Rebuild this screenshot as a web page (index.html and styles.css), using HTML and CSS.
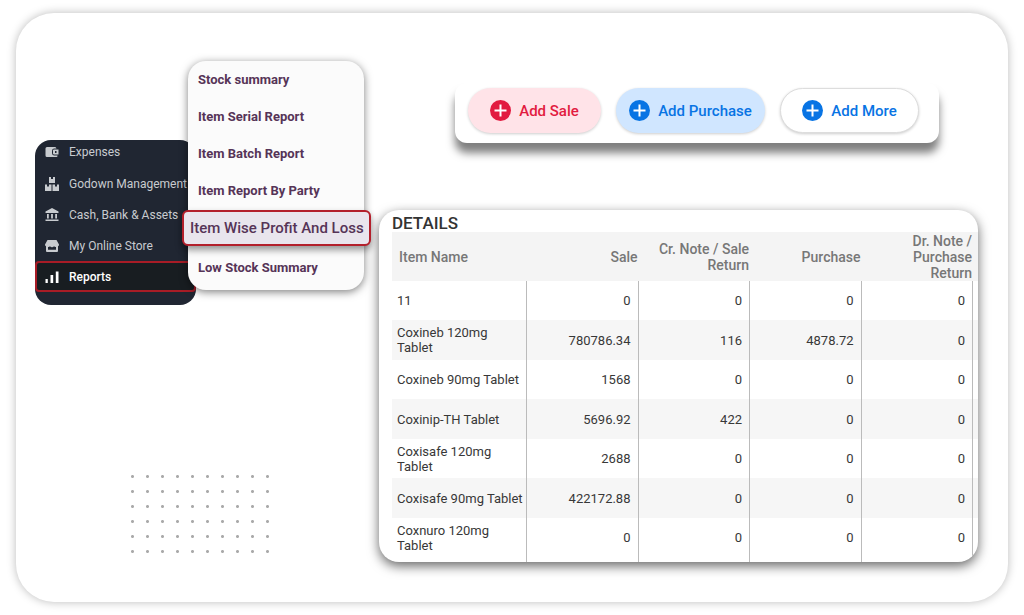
FILE: index.html
```html
<!DOCTYPE html>
<html lang="en">
<head>
<meta charset="utf-8">
<meta name="viewport" content="width=device-width, initial-scale=1">
<title>Item Wise Profit And Loss</title>
<link rel="stylesheet" href="styles.css">
</head>
<body>
<main class="stage">
  <section class="left">
    <div class="navigation">
      <nav class="sidebar" aria-label="Main">
        <a class="side-link" href="#expenses"><svg class="side-icon" viewBox="0 0 14 14"><path d="M2 2h8a2 2 0 0 1 1.500 1.500H9A2.500 2.500 0 0 0 7 6v2a2.500 2.500 0 0 0 2 2.500h3.500V11a1 1 0 0 1-1 1H2a1.500 1.500 0 0 1-1.500-1.500v-7A1.500 1.500 0 0 1 2 2zM9 4.500h4.500v5H9A1.200 1.200 0 0 1 8 8.500v-3a1 1 0 0 1 1-1zM10 6v2h1.500V6z" fill-rule="evenodd"/></svg>Expenses</a>
        <a class="side-link" href="#godown"><svg class="side-icon" viewBox="0 0 14 14"><path d="M4 0h2v2h2V0h2v6H4zM0 7.500h2v2h2v-2h2.500V14H0zM7.500 7.500H10v2h2v-2h2V14H7.500z"/></svg>Godown Management</a>
        <a class="side-link" href="#cash"><svg class="side-icon" viewBox="0 0 14 14"><path d="M7 0l6.500 3.500v1.500H.5V3.500zM2 6h1.800v4.500H2zM6.100 6h1.800v4.500H6.100zM10.200 6H12v4.500h-1.800zM.5 11.500h13V13H.5z"/></svg>Cash, Bank &amp; Assets</a>
        <a class="side-link" href="#store"><svg class="side-icon" viewBox="0 0 14 14"><path d="M2.500 1h9L14 5.500a2 2 0 0 1-1 1.800V12a1 1 0 0 1-1 1H2a1 1 0 0 1-1-1V7.300A2 2 0 0 1 0 5.500zM3 8v2.800h8V8a2.200 2.200 0 0 1-2-.8 2.500 2.500 0 0 1-4 0A2.200 2.200 0 0 1 3 8z" fill-rule="evenodd"/></svg>My Online Store</a>
        <a class="side-link side-link-active" href="#reports" aria-current="page"><svg class="side-icon" viewBox="0 0 14 14"><path d="M.5 9h2.300v4H.5zM5.500 5h2.700v8H5.500zM10.800 1.500h2.700V13h-2.700z"/></svg>Reports</a>
      </nav>
      <nav class="reports" aria-label="Reports">
        <a class="report" href="#stock">Stock summary</a>
        <a class="report" href="#serial">Item Serial Report</a>
        <a class="report" href="#batch">Item Batch Report</a>
        <a class="report" href="#party">Item Report By Party</a>
        <a class="report report-active" href="#profit" aria-current="page">Item Wise Profit And Loss</a>
        <a class="report" href="#low">Low Stock Summary</a>
      </nav>
    </div>
    <div class="dots"></div>
  </section>

  <section class="right">
    <div class="toolbar">
      <button class="pill pill-sale" type="button"><svg class="plus" viewBox="0 0 21 21"><circle cx="10.500" cy="10.500" r="10.500"/><path d="M10.500 4.500v12M4.500 10.500h12"/></svg>Add Sale</button>
      <button class="pill pill-purchase" type="button"><svg class="plus" viewBox="0 0 21 21"><circle cx="10.500" cy="10.500" r="10.500"/><path d="M10.500 4.500v12M4.500 10.500h12"/></svg>Add Purchase</button>
      <button class="pill pill-more" type="button"><svg class="plus" viewBox="0 0 21 21"><circle cx="10.500" cy="10.500" r="10.500"/><path d="M10.500 4.500v12M4.500 10.500h12"/></svg>Add More</button>
    </div>
    <div class="details">
      <h1 class="title" id="details-title">DETAILS</h1>
      <table class="table" aria-labelledby="details-title">
        <colgroup><col class="col-name"><col><col><col><col><col class="col-end"></colgroup>
        <thead>
          <tr><th scope="col">Item Name</th><th scope="col">Sale</th><th scope="col">Cr. Note / Sale Return</th><th scope="col">Purchase</th><th scope="col">Dr. Note /<br>Purchase<br>Return</th><td></td></tr>
        </thead>
        <tbody>
          <tr><td>11</td><td>0</td><td>0</td><td>0</td><td>0</td><td></td></tr>
          <tr><td>Coxineb 120mg<br>Tablet</td><td>780786.34</td><td>116</td><td>4878.72</td><td>0</td><td></td></tr>
          <tr><td>Coxineb 90mg Tablet</td><td>1568</td><td>0</td><td>0</td><td>0</td><td></td></tr>
          <tr><td>Coxinip-TH Tablet</td><td>5696.92</td><td>422</td><td>0</td><td>0</td><td></td></tr>
          <tr><td>Coxisafe 120mg<br>Tablet</td><td>2688</td><td>0</td><td>0</td><td>0</td><td></td></tr>
          <tr><td>Coxisafe 90mg Tablet</td><td>422172.88</td><td>0</td><td>0</td><td>0</td><td></td></tr>
          <tr><td>Coxnuro 120mg<br>Tablet</td><td>0</td><td>0</td><td>0</td><td>0</td><td></td></tr>
        </tbody>
      </table>
    </div>
  </section>
</main>
</body>
</html>
```

FILE: styles.css
```css
* {
  box-sizing: border-box;
}

body {
  margin: 0;
  padding: 13px 16px;
  background: #fff;
  font-family: Roboto, "Liberation Sans", sans-serif;
}

.stage {
  display: flex;
  padding: 48px 30px 40px 19px;
  border-radius: 38px;
  background: #fff;
  box-shadow: 0 0 10px rgba(0, 0, 0, 0.27);
}

.left {
  flex: none;
  width: 344px;
}

.navigation {
  display: flex;
  align-items: flex-start;
}

.sidebar {
  width: 161px;
  margin-top: 79px;
  padding-bottom: 13px;
  border-radius: 16px;
  background: #202632;
  overflow: hidden;
}

.side-link {
  display: flex;
  align-items: center;
  gap: 10px;
  height: 31px;
  padding-left: 10px;
  color: #c8cbcf;
  font-size: 12px;
  text-decoration: none;
  white-space: nowrap;
}

.side-link:first-child {
  height: 28px;
  padding-bottom: 4px;
}

.side-link-active {
  padding-left: 8px;
  border: 2px solid #a81c26;
  border-radius: 4px;
  background: #181d21;
  color: #fff;
  font-weight: 500;
}

.side-icon {
  flex: none;
  width: 14px;
  height: 14px;
  fill: currentColor;
}

.reports {
  z-index: 1;
  width: 176px;
  margin-left: -8px;
  padding-bottom: 4px;
  border-radius: 18px;
  background: #fbfbfb;
  box-shadow: 0 2px 8px rgba(0, 0, 0, 0.5);
}

.report {
  display: flex;
  align-items: center;
  height: 37px;
  padding-left: 10px;
  color: #563457;
  font-size: 13px;
  font-weight: 700;
  text-decoration: none;
  white-space: nowrap;
}

.report-active {
  height: 36px;
  margin: 1px -7px 3px -6px;
  padding-left: 6px;
  border: 2px solid #b3202c;
  border-radius: 6px;
  background: #e9e5ed;
  box-shadow: 0 4px 7px rgba(0, 0, 0, 0.4);
  font-size: 15px;
  font-weight: 500;
}

.dots {
  width: 150px;
  height: 90px;
  margin: 164px 0 0 90px;
  background: radial-gradient(circle, #aaa 1px, transparent 2px) 0 0 / 15px 15px;
}

.right {
  display: flex;
  flex: 1;
  flex-direction: column;
  gap: 67px;
  min-width: 0;
  padding-top: 22px;
}

.toolbar {
  display: flex;
  align-self: flex-end;
  gap: 15px;
  margin-right: 39px;
  padding: 5px 20px 10px 13px;
  border-radius: 12px;
  background: #fff;
  box-shadow: 0 10px 8px rgba(0, 0, 0, 0.5);
}

.pill {
  display: flex;
  align-items: center;
  justify-content: center;
  gap: 8px;
  width: 133px;
  height: 45px;
  padding: 0;
  border: 0;
  border-radius: 23px;
  box-shadow: 0 1px 3px rgba(0, 0, 0, 0.2);
  font: 500 15px Roboto, "Liberation Sans", sans-serif;
  white-space: nowrap;
}

.pill-sale {
  background: #ffe3e8;
  color: #e21b40;
}

.pill-purchase {
  width: 149px;
  background: #d0e6ff;
  color: #0874e4;
}

.pill-more {
  width: 139px;
  border: 1px solid #ddd;
  background: #fff;
  color: #0874e4;
}

.plus {
  width: 21px;
  height: 21px;
  fill: currentColor;
  stroke: #fff;
  stroke-width: 2;
}

.plus circle {
  stroke: none;
}

.details {
  padding-left: 13px;
  border-radius: 20px;
  background: #fff;
  box-shadow: 0 4px 12px rgba(0, 0, 0, 0.6);
  overflow: hidden;
}

.title {
  margin: 0;
  padding-top: 4px;
  color: #333;
  font-size: 17px;
  font-weight: 500;
  line-height: 18px;
}

.table {
  width: 100%;
  border-collapse: separate;
  border-spacing: 0;
  table-layout: fixed;
  color: #383838;
  font-size: 13px;
  line-height: 15px;
}

.col-name {
  width: 135px;
}

.col-end {
  width: 5px;
}

.table th,
.table td {
  padding: 0 7px 0 0;
  text-align: right;
  vertical-align: middle;
}

.table thead th,
.table thead td {
  height: 49px;
  padding-right: 1px;
  background: #f4f4f4;
  color: #777;
  font-size: 14px;
  font-weight: 500;
  line-height: 16px;
}

.table thead th:first-child {
  padding-left: 7px;
  text-align: left;
}

.table tbody td {
  height: 39px;
  border-right: 1px solid #bbb;
}

.table tbody tr:nth-child(even) td {
  height: 40px;
  background: #f6f6f6;
}

.table tbody td:first-child {
  padding: 0 0 0 5px;
  text-align: left;
}

.table thead td:last-child,
.table tbody td:last-child {
  padding: 0;
  border: 0;
}

.table tbody tr:last-child td {
  height: 44px;
  padding-bottom: 5px;
}
```
